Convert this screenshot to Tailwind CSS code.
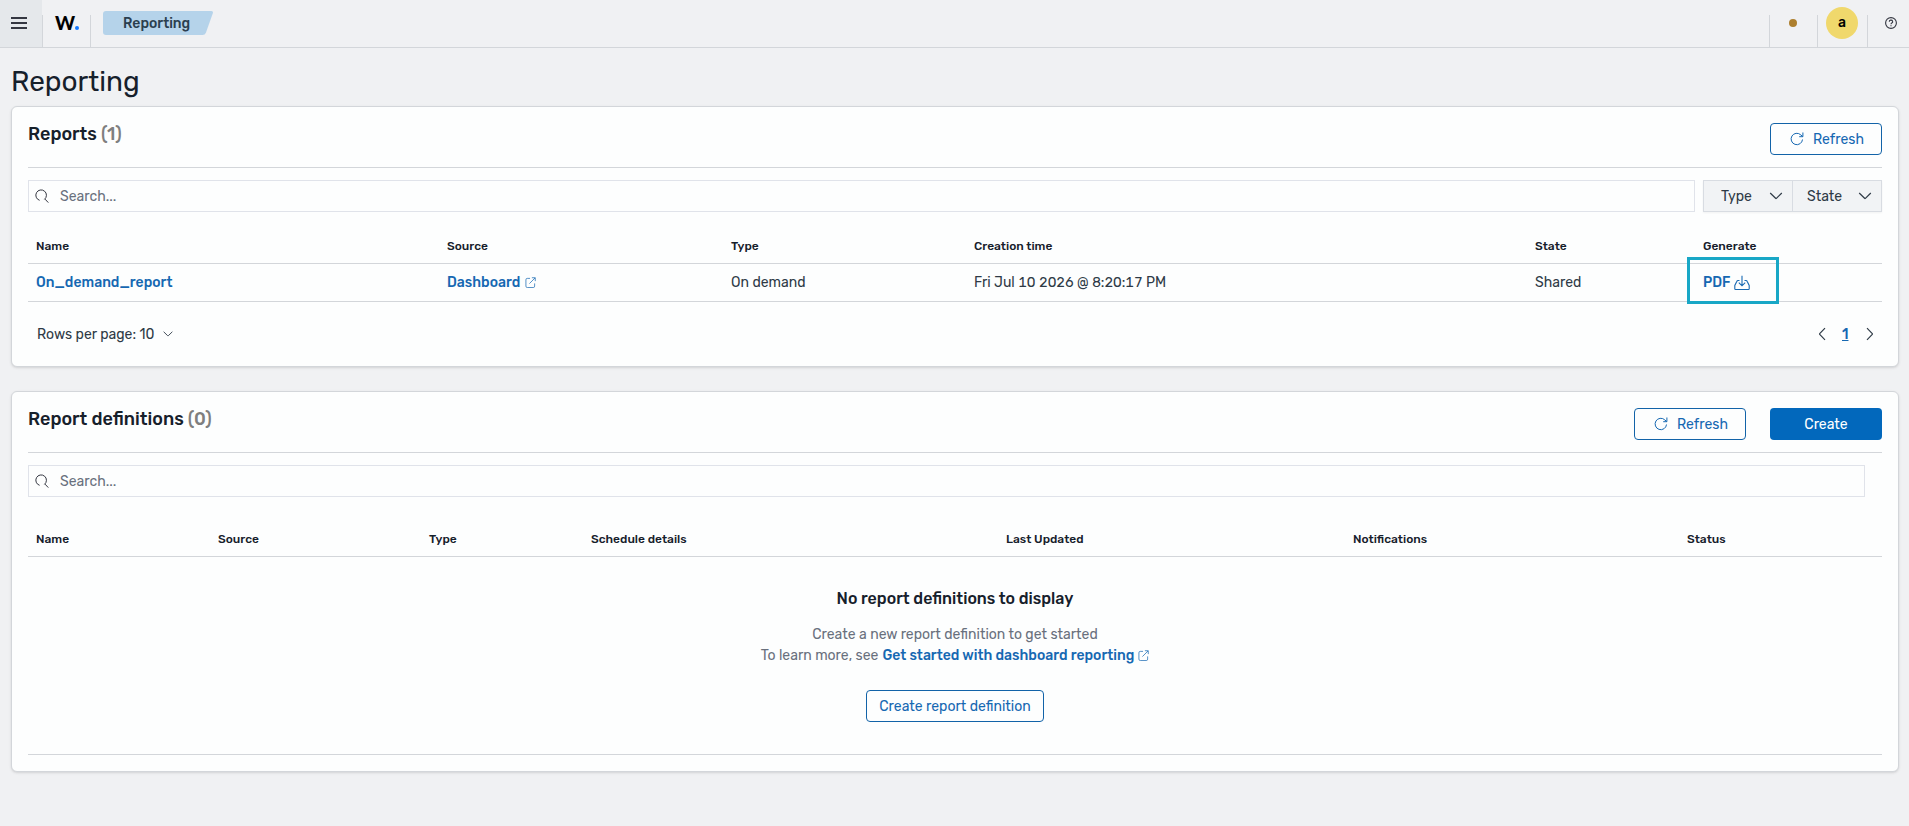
<!DOCTYPE html>
<html lang="en">
<head>
  <meta charset="UTF-8" />
  <meta name="viewport" content="width=device-width, initial-scale=1.0">
  <title>Reporting</title>

  <script src="https://cdn.jsdelivr.net/npm/@tailwindcss/browser@4"></script>
</head>
<body class="bg-[#f0f1f3] h-screen overflow-hidden font-[Rubik,Roboto,sans-serif] text-sm text-[#2e3a46]">

  <!-- Shared icons -->
  <svg class="hidden">
    <symbol id="search" viewBox="0 0 14 14"><path d="M4.600 11.300A5.300 5.300 0 1 1 9.400 10.400M10 10.100L13.300 13.600" fill="none" stroke="currentColor" stroke-width="1"/></symbol>
    <symbol id="refresh" viewBox="0 0 14 14"><path d="M12.500 7.500A5.700 5.700 0 1 1 10.800 2.900L12.700 4.500M12.900.500V4.700H9.200" fill="none" stroke="currentColor" stroke-width="1"/></symbol>
    <symbol id="chevron" viewBox="0 0 16 16"><path d="M2.200 5l5.400 5.300q.4.400.8 0L13.800 5" fill="none" stroke="currentColor" stroke-width="1.200"/></symbol>
    <symbol id="popout" viewBox="0 0 12 12"><path d="M5.500 1.500h-3a1.500 1.500 0 0 0-1.500 1.500v7a1.500 1.500 0 0 0 1.500 1.500h6.500a1.500 1.500 0 0 0 1.500-1.500V7M7.500.8h3.700v3.700M11 1L4.800 7.200" fill="none" stroke="currentColor" stroke-width=".8"/></symbol>
    <symbol id="import" viewBox="0 0 16 16"><path d="M5.500 5.500H4q-.8 0-1.100.8L.8 10.500v3.200q0 .8.800.8h12.800q.8 0 .8-.8v-3.200l-2.100-4.200q-.3-.8-1.100-.8h-1.500M8 .8v10M4.800 7.600L8 10.800l3.200-3.200" fill="none" stroke="currentColor" stroke-width="1.100"/></symbol>
  </svg>

  <!-- Top bar -->
  <header class="h-12 flex items-end justify-between border-b border-[#d3d6da]">
    <div class="flex items-end h-full">
      <button class="w-[42px] h-full bg-[#e5e8eb] pl-[11px] pt-[3px] flex items-center">
        <svg class="w-4 h-3 -mt-1" viewBox="0 0 16 12"><path d="M0 1h16M0 6h16M0 11h16" stroke="#343741" stroke-width="2"/></svg>
      </button>
      <div class="w-[49px] h-8 border-x border-[#d3d6da] pl-3 text-black">
        <div class="h-4 flex items-center font-[Lato] font-black text-[19px] leading-4"><span>W</span><span class="w-1 h-1 rounded-full bg-[#1478ff] mt-[9px]"></span></div>
      </div>
      <div class="relative w-[110px] h-6 mb-3 ml-3 pl-5 text-[#2b3f4f] font-medium leading-[25px]">
        <svg class="absolute inset-0" width="110" height="24" viewBox="0 0 110 24"><path d="M3 0h105q2.500 0 1.800 2.200L103 21.500q-1 2.500-3.500 2.500H3q-3 0-3-3V3q0-3 3-3z" fill="#b5d3ea"/></svg>
        <span class="relative">Reporting</span>
      </div>
    </div>
    <div class="flex text-black">
      <div class="w-12 h-8 border-l border-[#d3d6da] pl-[19px] pt-1"><div class="w-2 h-2 rounded-full bg-[#ad7f2e]"></div></div>
      <div class="w-[50px] h-8 border-l border-[#d3d6da] pl-2"><div class="w-8 h-8 -mt-2 rounded-full bg-[#f0d86c] flex items-center justify-center font-medium">a</div></div>
      <div class="w-[42px] h-8 border-l border-[#d3d6da] pl-[17px] pt-[2px]">
        <svg class="w-3 h-3" viewBox="0 0 12 12" fill="none" stroke="#343741" stroke-width="1.100"><circle cx="6" cy="6" r="5.400"/><path d="M4.300 4.800a1.700 1.600 0 1 1 2.500 1.300q-.8.400-.8 1.200M6 8.200v1"/></svg>
      </div>
    </div>
  </header>

  <main class="pl-[11px] pr-[10px]">
    <h1 class="h-[58px] pt-[14px] text-[28px] leading-10 text-[#16202b]">Reporting</h1>

    <!-- Reports -->
    <section class="h-[261px] bg-[#fdfefe] border border-[#d3d6da] rounded-md shadow-sm px-4 pt-4">
      <div class="h-[45px] flex justify-between border-b border-[#d3d6da]">
        <h2 class="text-lg leading-[22px] font-medium text-[#16202b]">Reports <span class="text-[#7f7f7f]">(1)</span></h2>
        <button class="w-28 h-8 rounded border border-[#1263a8] text-[#1668b2] flex items-center pl-[19px] gap-[9px]"><svg class="w-[14px] h-[14px]"><use href="#refresh"/></svg><span class="pt-px">Refresh</span></button>
      </div>
      <div class="flex mt-3 gap-2">
        <div class="flex-1 h-8 border border-[#e0e3ea] flex items-center pl-[6px] gap-[11px] text-[#69707d]"><svg class="w-[14px] h-[14px] text-[#343741]"><use href="#search"/></svg><span class="pt-px">Search...</span></div>
        <div class="w-[179px] h-8 flex bg-[#f1f3f5] border border-[#d8dce2] shadow-xs">
          <div class="w-[89px] flex items-center justify-between pl-[17px] pr-2 border-r border-[#d8dce2]"><span class="pt-px">Type</span><svg class="w-4 h-4"><use href="#chevron"/></svg></div>
          <div class="flex-1 flex items-center justify-between pl-[14px] pr-2"><span class="pt-px">State</span><svg class="w-4 h-4"><use href="#chevron"/></svg></div>
        </div>
      </div>
      <table class="w-full table-fixed mt-4 text-left">
        <colgroup><col class="w-[411px]"><col class="w-[284px]"><col class="w-[243px]"><col class="w-[561px]"><col class="w-[168px]"><col></colgroup>
        <thead>
          <tr class="h-[35px] border-b border-[#d3d6da] text-xs text-[#16202b]">
            <th class="px-2 pt-px font-medium">Name</th>
            <th class="px-2 pt-px font-medium">Source</th>
            <th class="px-2 pt-px font-medium">Type</th>
            <th class="px-2 pt-px font-medium">Creation time</th>
            <th class="px-2 pt-px font-medium">State</th>
            <th class="px-2 pt-px font-medium">Generate</th>
          </tr>
        </thead>
        <tbody>
          <tr class="h-[38px] border-b border-[#d3d6da]">
            <td class="px-2 pt-px font-medium text-[#1668b2]">On_demand_report</td>
            <td class="px-2 pt-px font-medium text-[#1668b2]"><div class="flex items-center gap-[5px]"><span>Dashboard</span><svg class="w-[11px] h-[11px]"><use href="#popout"/></svg></div></td>
            <td class="px-2 pt-px">On demand</td>
            <td class="px-2 pt-px tabular-nums">Fri Jul 10 2026 @ 8:20:17 PM</td>
            <td class="px-2 pt-px">Shared</td>
            <td class="px-2 pt-px font-medium text-[#1668b2] relative">
              <div class="flex items-center gap-1"><span>PDF</span><svg class="w-4 h-4 mt-px"><use href="#import"/></svg></div>
              <!-- highlight around the download link -->
              <div class="absolute -left-2 -top-[7px] w-[92px] h-[47px] border-3 border-[#18a7c6]"></div>
            </td>
          </tr>
        </tbody>
      </table>
      <div class="h-[64px] flex items-center justify-between pl-[9px] pr-1">
        <div class="flex items-center gap-2"><span class="pt-[2px]">Rows per page: 10</span><svg class="w-3 h-3"><use href="#chevron"/></svg></div>
        <div class="flex items-center gap-3">
          <svg class="w-4 h-4 rotate-90"><use href="#chevron"/></svg>
          <span class="w-[8px] pt-[2px] font-medium text-[#1668b2] underline">1</span>
          <svg class="w-4 h-4 -rotate-90"><use href="#chevron"/></svg>
        </div>
      </div>
    </section>

    <!-- Report definitions -->
    <section class="h-[381px] mt-6 bg-[#fdfefe] border border-[#d3d6da] rounded-md shadow-sm px-4 pt-4">
      <div class="h-[45px] flex border-b border-[#d3d6da]">
        <h2 class="flex-1 text-lg leading-[22px] font-medium text-[#16202b]">Report definitions <span class="text-[#7f7f7f]">(0)</span></h2>
        <button class="w-28 h-8 mr-6 rounded border border-[#1263a8] text-[#1668b2] flex items-center pl-[19px] gap-[9px]"><svg class="w-[14px] h-[14px]"><use href="#refresh"/></svg><span class="pt-px">Refresh</span></button>
        <button class="w-28 h-8 pt-px rounded bg-[#0268bc] text-white">Create</button>
      </div>
      <div class="h-8 mt-3 mr-[17px] border border-[#e0e3ea] flex items-center pl-[6px] gap-[11px] text-[#69707d]"><svg class="w-[14px] h-[14px] text-[#343741]"><use href="#search"/></svg><span class="pt-px">Search...</span></div>
      <table class="w-full table-fixed mt-6 text-left">
        <colgroup><col class="w-[182px]"><col class="w-[211px]"><col class="w-[162px]"><col class="w-[415px]"><col class="w-[347px]"><col class="w-[334px]"><col></colgroup>
        <thead>
          <tr class="h-[35px] border-b border-[#d3d6da] text-xs text-[#16202b]">
            <th class="px-2 pt-px font-medium">Name</th>
            <th class="px-2 pt-px font-medium">Source</th>
            <th class="px-2 pt-px font-medium">Type</th>
            <th class="px-2 pt-px font-medium">Schedule details</th>
            <th class="px-2 pt-px font-medium">Last Updated</th>
            <th class="px-2 pt-px font-medium">Notifications</th>
            <th class="px-2 pt-px font-medium">Status</th>
          </tr>
        </thead>
      </table>
      <div class="h-[198px] pt-[30px] border-b border-[#d3d6da] flex flex-col items-center text-[#69707d]">
        <h3 class="text-base leading-6 font-medium text-[#16202b]">No report definitions to display</h3>
        <p class="mt-[13px] leading-[21px]">Create a new report definition to get started</p>
        <p class="leading-[21px] flex items-center">To learn more, see<span class="mx-1 font-medium text-[#1668b2]">Get started with dashboard reporting</span><svg class="w-[11px] h-[11px] text-[#1668b2]"><use href="#popout"/></svg></p>
        <button class="w-[178px] h-8 pt-[2px] mt-6 rounded border border-[#1263a8] text-[#1668b2]">Create report definition</button>
      </div>
    </section>
  </main>

</body>
</html>
